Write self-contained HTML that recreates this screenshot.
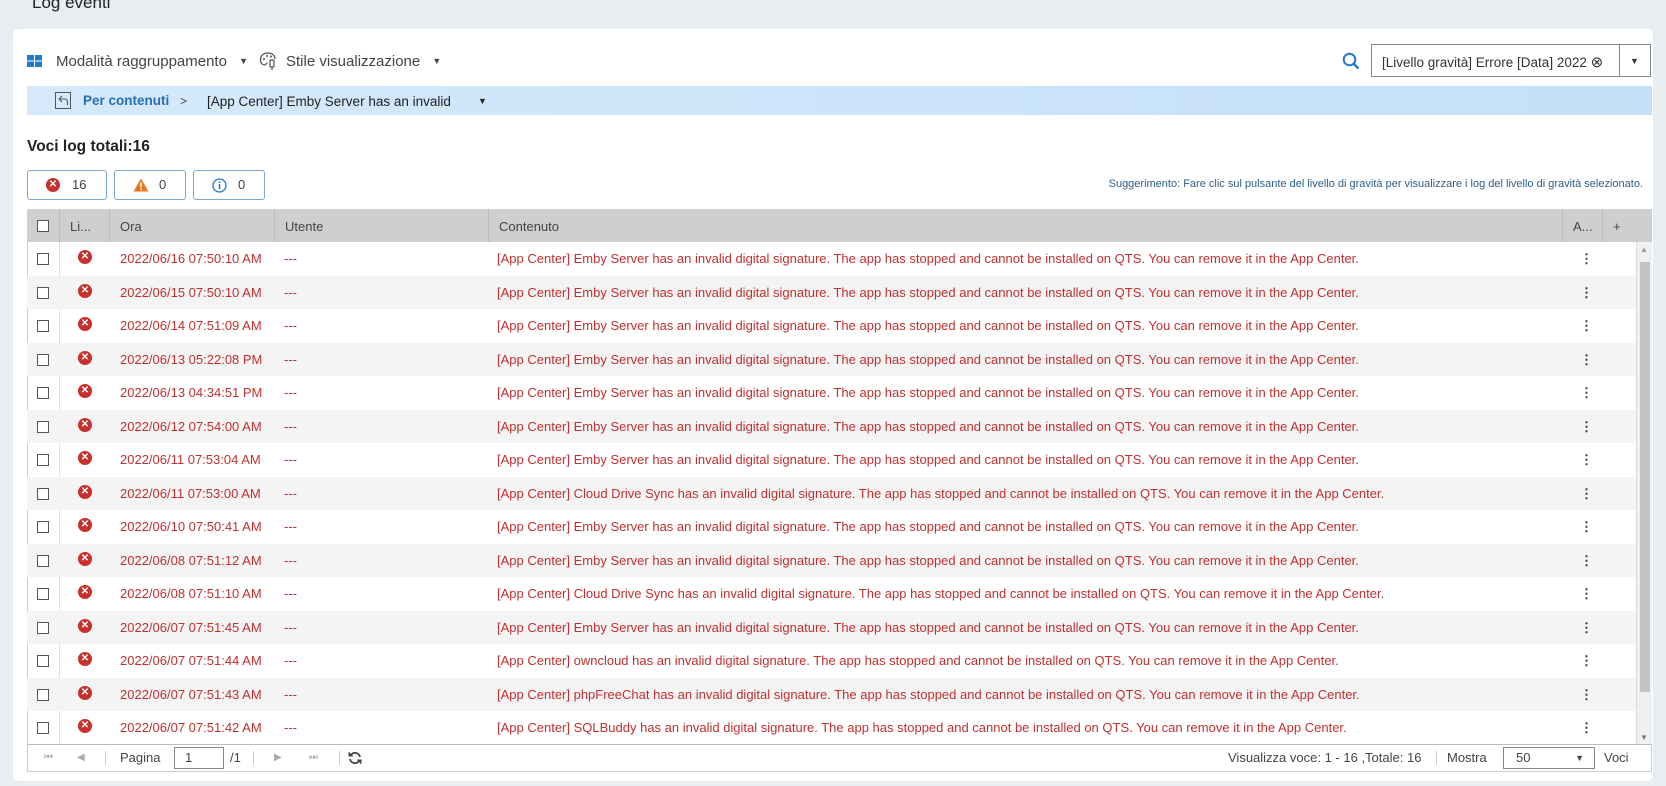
<!DOCTYPE html>
<html><head><meta charset="utf-8"><style>
*{box-sizing:border-box;margin:0;padding:0}
body{width:1666px;height:786px;background:#e8edf2;font-family:"Liberation Sans",sans-serif;position:relative;overflow:hidden;color:#333}
.abs{position:absolute}
.card{left:13px;top:29px;width:1640px;height:752px;background:#fff;border-radius:6px}
.tb{font-size:15px;color:#444;top:53px}
.bc{left:27px;top:86px;width:1625px;height:29px;background:linear-gradient(90deg,#d5e9fb,#c4e0f9)}
.hdr{left:27px;top:209px;width:1625px;height:33px;background:#cfcfcf}
.hdr div{position:absolute;top:0;height:33px;line-height:35px;font-size:13px;color:#444;border-left:1px solid #bbb;padding-left:10px}
.rows{left:27px;top:242px;width:1609px;height:502px;overflow:hidden}
.row{height:33.5px;position:relative;font-size:13px;color:#c0302f;line-height:33.5px}
.row:nth-child(even){background:#f4f4f4}
.row span{position:absolute}
.cb{width:12px;height:12px;border:1px solid #555;background:#fff;position:absolute}
.err{width:14px;height:14px;border-radius:50%;background:#c9302c;color:#fff;font-size:10px;line-height:14px;text-align:center;font-weight:bold}
.btn{top:170px;height:30px;border:1px solid #7aa8d0;border-radius:3px;font-size:13px;color:#444;line-height:28px}
</style></head><body>
<div class="abs" style="left:32px;top:-7px;font-size:17px;color:#222">Log eventi</div>
<div class="abs card"></div>
<!-- toolbar -->
<svg class="abs" style="left:27px;top:55px" width="15" height="12"><rect x="0" y="0" width="7" height="5.5" fill="#1f7bc9"/><rect x="8" y="0" width="7" height="5.5" fill="#1f7bc9"/><rect x="0" y="6.5" width="7" height="5.5" fill="#1f7bc9"/><rect x="8" y="6.5" width="7" height="5.5" fill="#1f7bc9"/></svg>
<div class="abs tb" style="left:56px">Modalità raggruppamento <span style="font-size:9px;margin-left:8px;vertical-align:2px">▼</span></div>
<svg class="abs" style="left:259px;top:51px" width="18" height="20" viewBox="0 0 18 20"><path d="M9 2C4 2 1.5 5 1.5 9c0 3 2 5 4 5 1.5 0 1.5-2 3-2" fill="none" stroke="#555" stroke-width="1.3"/><path d="M9 2c4 0 7 2.5 7 6" fill="none" stroke="#555" stroke-width="1.3"/><circle cx="5" cy="8" r="1" fill="#555"/><circle cx="8" cy="5" r="1" fill="#555"/><circle cx="12" cy="5.5" r="1" fill="#555"/><rect x="11" y="9" width="4" height="7" rx="1" fill="none" stroke="#555" stroke-width="1.2"/><path d="M13 16v3" stroke="#555" stroke-width="1.3"/></svg>
<div class="abs tb" style="left:286px">Stile visualizzazione <span style="font-size:9px;margin-left:8px;vertical-align:2px">▼</span></div>
<svg class="abs" style="left:1342px;top:52px" width="18" height="18"><circle cx="7.5" cy="7.5" r="5.8" fill="none" stroke="#1f7bc9" stroke-width="2"/><path d="M11.8 11.8L16.5 16.5" stroke="#1f7bc9" stroke-width="2.4"/></svg>
<div class="abs" style="left:1371px;top:44px;width:280px;height:33px;border:1px solid #888;background:#fff"></div>
<div class="abs" style="left:1619px;top:44px;width:1px;height:33px;background:#888"></div>
<div class="abs" style="left:1382px;top:53px;font-size:13.5px;color:#333">[Livello gravità] Errore [Data] 2022 <span style="font-size:15px">⊗</span></div>
<div class="abs" style="left:1630px;top:56px;font-size:9px;color:#333">▼</div>
<!-- breadcrumb -->
<div class="abs bc"></div>
<svg class="abs" style="left:55px;top:92px" width="16" height="17"><rect x="0.5" y="0.5" width="15" height="16" fill="none" stroke="#555"/><path d="M4 7h6c2 0 2.5 1.5 2.5 3.5V13M4 7l3-3M4 7l3 3" fill="none" stroke="#555" stroke-width="1.1"/></svg>
<div class="abs" style="left:83px;top:93px;font-size:13.5px;font-weight:bold;color:#2a6fb0">Per contenuti</div>
<div class="abs" style="left:180px;top:94px;font-size:12px;color:#444">&gt;</div>
<div class="abs" style="left:207px;top:94px;font-size:13.5px;color:#222">[App Center] Emby Server has an invalid</div>
<div class="abs" style="left:478px;top:96px;font-size:9px;color:#222">▼</div>
<!-- title & buttons -->
<div class="abs" style="left:27px;top:138px;font-size:15.5px;font-weight:bold;color:#222">Voci log totali:16</div>
<div class="abs btn" style="left:27px;width:80px"><span class="abs err" style="left:18px;top:7px">✕</span><span class="abs" style="left:44px">16</span></div>
<div class="abs btn" style="left:114px;width:72px"><svg class="abs" style="left:18px;top:7px" width="16" height="14"><path d="M8 0.5L15.5 13.5H0.5Z" fill="#e8771c"/><rect x="7.2" y="4.5" width="1.6" height="5" fill="#fff"/><rect x="7.2" y="10.5" width="1.6" height="1.6" fill="#fff"/></svg><span class="abs" style="left:44px">0</span></div>
<div class="abs btn" style="left:193px;width:72px"><svg class="abs" style="left:18px;top:7px" width="15" height="15"><circle cx="7.5" cy="7.5" r="6.5" fill="none" stroke="#1f7bc9" stroke-width="1.3"/><rect x="6.8" y="6" width="1.5" height="5" fill="#1f7bc9"/><rect x="6.8" y="3.5" width="1.5" height="1.5" fill="#1f7bc9"/></svg><span class="abs" style="left:44px">0</span></div>
<div class="abs" style="right:23px;top:178px;font-size:11px;color:#2a5f8a">Suggerimento: Fare clic sul pulsante del livello di gravità per visualizzare i log del livello di gravità selezionato.</div>
<!-- header -->
<div class="abs hdr">
<span class="cb" style="left:10px;top:11px"></span>
<div style="left:32px">Li...</div>
<div style="left:82px">Ora</div>
<div style="left:247px">Utente</div>
<div style="left:461px">Contenuto</div>
<div style="left:1535px">A...</div>
<div style="left:1575px;border-left:1px solid #bbb">+</div>
</div>
<div class="abs" style="left:1636px;top:242px;width:16px;height:502px;background:#f0f0f0;border-left:1px solid #ddd"></div>
<div class="abs" style="left:1640px;top:262px;width:10px;height:430px;background:#c3c3c3"></div>
<div class="abs" style="left:1640px;top:245px;font-size:8px;color:#999">▲</div>
<div class="abs" style="left:1640px;top:733px;font-size:8px;color:#777">▼</div>
<div class="abs" style="left:27px;top:242px;width:1px;height:502px;background:#ccc"></div>
<div class="abs" style="left:59px;top:242px;width:1px;height:502px;background:#e0e0e0"></div>
<div class="abs rows" id="rows"></div>
<!-- pager -->
<div class="abs" style="left:27px;top:744px;width:1625px;height:28px;border:1px solid #ccc;border-top:1px solid #bbb;font-size:13px;color:#444;line-height:26px;background:#fff">
<span class="abs" style="left:16px;color:#aaa;font-size:10px">⏮</span>
<span class="abs" style="left:49px;color:#aaa;font-size:10px">◀</span>
<span class="abs" style="left:77px;top:6px;width:1px;height:14px;background:#ccc"></span>
<span class="abs" style="left:92px">Pagina</span>
<span class="abs" style="left:146px;top:2px;width:50px;height:22px;border:1px solid #888;line-height:20px;padding-left:10px">1</span>
<span class="abs" style="left:202px">/1</span>
<span class="abs" style="left:225px;top:6px;width:1px;height:14px;background:#ccc"></span>
<span class="abs" style="left:246px;color:#aaa;font-size:10px">▶</span>
<span class="abs" style="left:281px;color:#aaa;font-size:10px">⏭</span>
<span class="abs" style="left:311px;top:6px;width:1px;height:14px;background:#ccc"></span>
<svg class="abs" style="left:320px;top:6px" width="14" height="14"><path d="M12 6A5 5 0 0 0 3 4M2 8a5 5 0 0 0 9 2" fill="none" stroke="#444" stroke-width="1.8"/><path d="M1 1v4h4M13 13V9H9" fill="#444" stroke="#444" stroke-width="1"/></svg>
<span class="abs" style="left:1200px">Visualizza voce: 1 - 16 ,Totale: 16</span>
<span class="abs" style="left:1408px;top:6px;width:1px;height:14px;background:#ccc"></span>
<span class="abs" style="left:1419px">Mostra</span>
<span class="abs" style="left:1475px;top:2px;width:92px;height:22px;border:1px solid #888;line-height:20px;padding-left:12px">50<span style="position:absolute;right:10px;font-size:9px">▼</span></span>
<span class="abs" style="left:1576px">Voci</span>
</div>
<script>
var d=[["2022/06/16 07:50:10 AM","Emby Server"],["2022/06/15 07:50:10 AM","Emby Server"],["2022/06/14 07:51:09 AM","Emby Server"],["2022/06/13 05:22:08 PM","Emby Server"],["2022/06/13 04:34:51 PM","Emby Server"],["2022/06/12 07:54:00 AM","Emby Server"],["2022/06/11 07:53:04 AM","Emby Server"],["2022/06/11 07:53:00 AM","Cloud Drive Sync"],["2022/06/10 07:50:41 AM","Emby Server"],["2022/06/08 07:51:12 AM","Emby Server"],["2022/06/08 07:51:10 AM","Cloud Drive Sync"],["2022/06/07 07:51:45 AM","Emby Server"],["2022/06/07 07:51:44 AM","owncloud"],["2022/06/07 07:51:43 AM","phpFreeChat"],["2022/06/07 07:51:42 AM","SQLBuddy"]];
var h="";d.forEach(function(r){h+='<div class="row"><span class="cb" style="left:10px;top:11px"></span><span class="err" style="left:51px;top:8px">✕</span><span style="left:93px">'+r[0]+'</span><span style="left:257px">---</span><span style="left:470px">[App Center] '+r[1]+' has an invalid digital signature. The app has stopped and cannot be installed on QTS. You can remove it in the App Center.</span><span style="left:1553px;color:#333;font-weight:bold">⋮</span></div>';});
document.getElementById("rows").innerHTML=h;
</script>
</body></html>
